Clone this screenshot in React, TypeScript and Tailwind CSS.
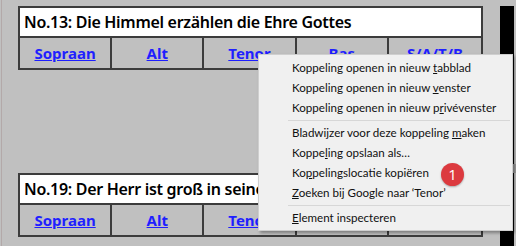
import React from 'react';

const titleFont = { fontFamily: '"Noto Sans", sans-serif' };

const voices = ['Sopraan', 'Alt', 'Tenor', 'Bas', 'S/A/T/B'];

const Piece = ({ title }: { title: string }) => (
  <div className="w-[465px] border-2 border-[#3c3c3c] bg-[#c0c0c0]">
    <div className="h-[30px] bg-white border-b-2 border-[#3c3c3c] flex items-center pl-[4px] text-[16px] font-semibold text-black whitespace-nowrap overflow-hidden tracking-[-0.3px]" style={titleFont}>
      {title}
    </div>
    <div className="grid grid-cols-5 h-[30px]">
      {voices.map((v, i) => (
        <div key={v} className={`flex items-center justify-center ${i < 4 ? 'border-r-2 border-[#3c3c3c]' : ''}`}>
          <a href="#" className="text-[15px] font-bold text-[#1f1fff] underline" style={titleFont}>{v}</a>
        </div>
      ))}
    </div>
  </div>
);

// menu label with an underlined access key
const Item = ({ pre, key_, post }: { pre: string; key_: string; post: string }) => (
  <div className="h-[20px] flex items-center pl-[33px] text-[11.6px] text-[#111] whitespace-pre">
    <span>
      {pre}<span className="underline">{key_}</span>{post}
    </span>
  </div>
);

const Sep = () => <div className="my-[2px] ml-[29px] mr-[2px] h-px bg-[#d7d7d7]" />;

export default function App() {
  return (
    <div className="relative w-[516px] h-[246px] bg-[#c0c0c0] overflow-hidden flex">
      <div className="w-px ml-px bg-[#b3a9a9]" />
      <div className="flex flex-col pl-[16px] pt-[6px] gap-[103px]">
        <Piece title="No.13: Die Himmel erzählen die Ehre Gottes" />
        <Piece title="No.19: Der Herr ist groß in seiner Macht" />
      </div>
      <div className="ml-[17px] mt-[6px] w-[14px] bg-black" />

      <div className="absolute right-0 top-[164px] w-[3px] h-[9px] bg-[#a0a0a0]" />

      <div className="absolute left-[258px] top-[54px] w-[255px] h-[177px] bg-[#f0f0f0] border border-[#cfcfcf] shadow-[2px_2px_3px_rgba(0,0,0,0.35)] pt-[3px]" style={{ fontFamily: '"Lato", sans-serif' }}>
        <Item pre="Koppeling openen in nieuw " key_="t" post="abblad" />
        <Item pre="Koppeling openen in nieuw " key_="v" post="enster" />
        <Item pre="Koppeling openen in nieuw p" key_="r" post="ivévenster" />
        <Sep />
        <Item pre="Bladwijzer voor deze koppeling " key_="m" post="aken" />
        <Item pre="Koppe" key_="l" post="ing opslaan als…" />
        <Item pre="Ko" key_="p" post="pelingslocatie kopiëren" />
        <Item pre="" key_="Z" post="oeken bij Google naar ‘Tenor’" />
        <Sep />
        <Item pre="" key_="E" post="lement inspecteren" />
        <div className="absolute left-[182px] top-[108px] w-[23px] h-[23px] rounded-full bg-[#dc3a3f] shadow-[0_1px_2px_rgba(0,0,0,0.3)] flex items-center justify-center text-white text-[15px]" style={{ fontFamily: '"Open Sans", sans-serif' }}>
          1
        </div>
      </div>
    </div>
  );
}
